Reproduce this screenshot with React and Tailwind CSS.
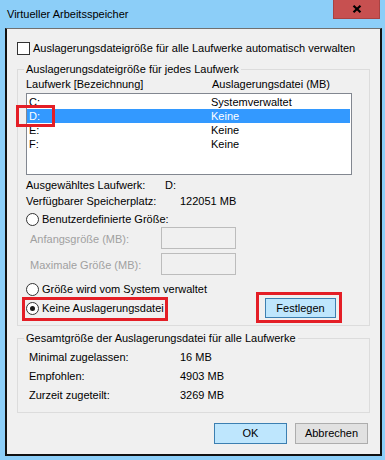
import React from "react";

function Radio({ checked }) {
  return (
    <div className="w-[13px] h-[13px] shrink-0 rounded-full border border-[#333333] bg-white flex items-center justify-center">
      {checked && <div className="w-[5px] h-[5px] rounded-full bg-[#1a1a1a]" />}
    </div>
  );
}

const drives = [
  { d: "C:", v: "Systemverwaltet", sel: false },
  { d: "D:", v: "Keine", sel: true },
  { d: "E:", v: "Keine", sel: false },
  { d: "F:", v: "Keine", sel: false },
];

export default function App() {
  return (
    <div className="relative w-[385px] h-[460px] overflow-hidden bg-[#8ccef8] flex flex-col font-['Liberation_Sans',Arial,sans-serif] text-[11px] text-black">
      {/* title bar */}
      <div className="flex h-[28px] shrink-0">
        <div className="flex-1 pl-[7px] pt-[7px] leading-[15px]">Virtueller Arbeitsspeicher</div>
        <div className="w-[47px] h-[19px] mr-[5px] bg-[#c75050] border border-t-0 border-[#a84242] flex items-center justify-center">
          <svg width="10" height="8" viewBox="0 0 10 8">
            <path d="M1.5 0.8 L8.5 7.2 M8.5 0.8 L1.5 7.2" stroke="#000" strokeWidth="2.2" fill="none" />
          </svg>
        </div>
      </div>

      {/* client panel */}
      <div className="ml-[5px] w-[377px] h-[428px] shrink-0 bg-[#f0f0f0] border-x-2 border-b-2 border-t border-[#111111] border-t-[#707070] flex flex-col">
        <div className="mt-[13px] ml-[10px] flex items-center h-[13px]">
          <div className="w-[13px] h-[13px] border border-[#333333] bg-white" />
          <span className="ml-[3px] leading-[15px]">Auslagerungsdateigröße für alle Laufwerke automatisch verwalten</span>
        </div>

        {/* group 1 */}
        <div className="mt-[14px] ml-[10px] w-[353px] border border-[#dcdcdc] pl-[8px] pb-[7px]">
          <div className="-mt-[8px] -ml-[2px] px-[2px] w-fit bg-[#f0f0f0] leading-[15px]">Auslagerungsdateigröße für jedes Laufwerk</div>
          <div className="flex h-[15px] leading-[15px]">
            <span className="w-[186px]">Laufwerk [Bezeichnung]</span>
            <span>Auslagerungsdatei (MB)</span>
          </div>
          <div className="mt-[1px] w-[326px] h-[82px] border border-[#828790] bg-white pt-[1px]">
            {drives.map((r) => (
              <div
                key={r.d}
                className={r.sel ? "flex h-[14px] items-center pl-[2px] mr-[1px] bg-[#3399ff] text-white" : "flex h-[14px] items-center pl-[2px] mr-[1px]"}
              >
                <span className="w-[182px] leading-[14px]">{r.d}</span>
                <span className="leading-[14px]">{r.v}</span>
              </div>
            ))}
          </div>
          <div className="mt-[2px] flex h-[16px] items-center">
            <span className="w-[139px]">Ausgewähltes Laufwerk:</span>
            <span>D:</span>
          </div>
          <div className="flex h-[16px] items-center">
            <span className="w-[154px]">Verfügbarer Speicherplatz:</span>
            <span>122051 MB</span>
          </div>
          <div className="mt-[3px] flex h-[15px] items-center">
            <Radio />
            <span className="ml-[3px]">Benutzerdefinierte Größe:</span>
          </div>
          <div className="flex h-[22px] items-start">
            <span className="w-[135px] pl-[4px] pt-[5px] leading-[15px] text-[#a0a0a0]">Anfangsgröße (MB):</span>
            <div className="w-[75px] h-[22px] border border-[#bcbcbc] bg-[#f0f0f0]" />
          </div>
          <div className="mt-[4px] flex h-[22px] items-start">
            <span className="w-[135px] pl-[4px] pt-[5px] leading-[15px] text-[#a0a0a0]">Maximale Größe (MB):</span>
            <div className="w-[75px] h-[22px] border border-[#bcbcbc] bg-[#f0f0f0]" />
          </div>
          <div className="mt-[6px] flex h-[16px] items-center">
            <Radio />
            <span className="ml-[3px]">Größe wird vom System verwaltet</span>
          </div>
          <div className="mt-[1px] flex h-[20px] items-center">
            <div className="w-[239px] flex items-center">
              <Radio checked />
              <span className="ml-[3px]">Keine Auslagerungsdatei</span>
            </div>
            <div className="w-[71px] h-[20px] border border-[#3c7fb1] bg-[#bee6fd] flex items-center justify-center">Festlegen</div>
          </div>
        </div>

        {/* group 2 */}
        <div className="mt-[12px] ml-[10px] w-[353px] border border-[#dcdcdc] pl-[8px] pb-[7px]">
          <div className="-mt-[8px] -ml-[2px] px-[2px] w-fit bg-[#f0f0f0] leading-[15px]">Gesamtgröße der Auslagerungsdatei für alle Laufwerke</div>
          <div className="mt-[2px] pl-[3px]">
            <div className="flex h-[19px] items-center">
              <span className="w-[151px]">Minimal zugelassen:</span>
              <span>16 MB</span>
            </div>
            <div className="flex h-[19px] items-center">
              <span className="w-[151px]">Empfohlen:</span>
              <span>4903 MB</span>
            </div>
            <div className="flex h-[19px] items-center">
              <span className="w-[151px]">Zurzeit zugeteilt:</span>
              <span>3269 MB</span>
            </div>
          </div>
        </div>

        {/* buttons */}
        <div className="mt-[10px] flex justify-end gap-[8px] pr-[12px]">
          <div className="w-[73px] h-[21px] border border-[#3c7fb1] bg-[#bee6fd] flex items-center justify-center">OK</div>
          <div className="w-[73px] h-[21px] border border-[#adadad] bg-[#e1e1e1] flex items-center justify-center">Abbrechen</div>
        </div>
      </div>

      {/* red annotation boxes */}
      <div className="absolute left-[16px] top-[105px] w-[39px] h-[22px] border-[3px] border-[#e41e26]" />
      <div className="absolute left-[22px] top-[297px] w-[146px] h-[24px] border-[3px] border-[#e41e26]" />
      <div className="absolute left-[256px] top-[292px] w-[86px] h-[31px] border-[3px] border-[#e41e26]" />
    </div>
  );
}
